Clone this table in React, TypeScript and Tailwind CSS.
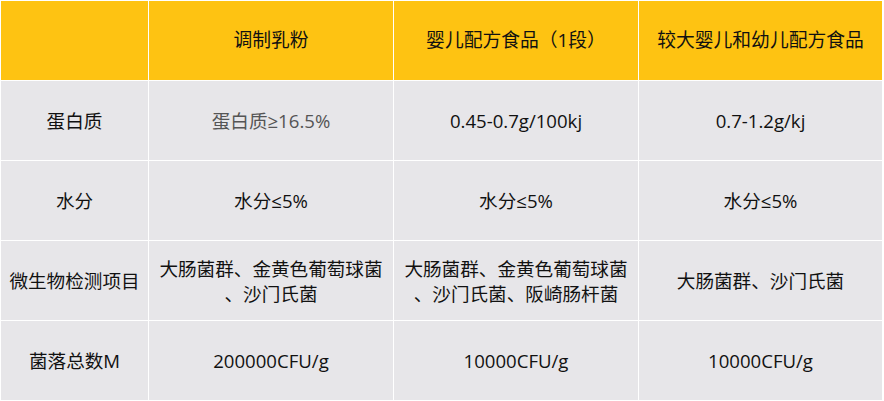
import React from "react";

const font = { fontFamily: '"Open Sans", "Noto Sans CJK SC", sans-serif' };

type Cell = { lines: string[]; grey?: boolean };

const header = ["", "调制乳粉", "婴儿配方食品（1段）", "较大婴儿和幼儿配方食品"];

const rows: Cell[][] = [
  [
    { lines: ["蛋白质"] },
    { lines: ["蛋白质≥16.5%"], grey: true },
    { lines: ["0.45-0.7g/100kj"] },
    { lines: ["0.7-1.2g/kj"] },
  ],
  [
    { lines: ["水分"] },
    { lines: ["水分≤5%"] },
    { lines: ["水分≤5%"] },
    { lines: ["水分≤5%"] },
  ],
  [
    { lines: ["微生物检测项目"] },
    { lines: ["大肠菌群、金黄色葡萄球菌", "、沙门氏菌"] },
    { lines: ["大肠菌群、金黄色葡萄球菌", "、沙门氏菌、阪崎肠杆菌"] },
    { lines: ["大肠菌群、沙门氏菌"] },
  ],
  [
    { lines: ["菌落总数M"] },
    { lines: ["200000CFU/g"] },
    { lines: ["10000CFU/g"] },
    { lines: ["10000CFU/g"] },
  ],
];

export default function App() {
  return (
    <div className="w-[884px] h-[401px] bg-white p-px" style={font}>
      <div className="grid grid-cols-[147px_244px_244px_243px] grid-rows-[79px_79px_79px_79px_79px] gap-px">
        {header.map((h, i) => (
          <div
            key={i}
            className="bg-[#fec312] flex items-center justify-center text-center text-[18.8px] text-[#111111] leading-[25px] pb-[1px] whitespace-nowrap"
          >
            {h}
          </div>
        ))}
        {rows.map((r, ri) =>
          r.map((c, ci) => (
            <div
              key={ri + "-" + ci}
              className={
                "bg-[#e7e6e9] flex flex-col items-center justify-center text-center text-[18.6px] leading-[25px] whitespace-nowrap " +
                (c.grey ? "text-[#555555]" : "text-[#111111]")
              }
            >
              {c.lines.map((l, li) => (
                <div key={li}>{l}</div>
              ))}
            </div>
          ))
        )}
      </div>
    </div>
  );
}
